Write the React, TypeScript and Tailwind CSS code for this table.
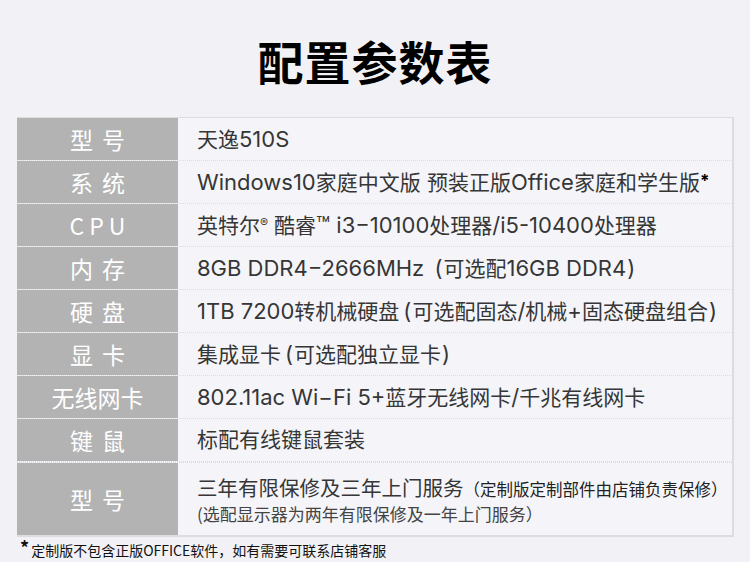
import React from "react";

// los tramos latinos se ven un poco más anchos que los chinos en la referencia
function Texto({ t }: { t: string }) {
  const partes = t.split(/([\u4e00-\u9fff，]+|[（）])/).filter(Boolean);
  return (
    <>
      {partes.map((p, i) => {
        if (p === "（") return <span key={i} className="text-[22px] ml-[4px] mr-[1px]">(</span>;
        if (p === "）") return <span key={i} className="text-[22px] ml-[1px]">)</span>;
        if (/[\u4e00-\u9fff]/.test(p)) return <span key={i}>{p}</span>;
        return <span key={i} className="text-[22px]">{p}</span>;
      })}
    </>
  );
}

const filas: { label: string[]; valor: React.ReactNode }[] = [
  { label: ["型", "号"], valor: <Texto t="天逸510S" /> },
  {
    label: ["系", "统"],
    valor: (
      <>
        <Texto t="Windows10家庭中文版 预装正版Office家庭和学生版" />
        <sup className="text-[17px] relative -top-[3px] text-black font-bold">*</sup>
      </>
    ),
  },
  {
    label: ["C", "P", "U"],
    valor: (
      <>
        英特尔<sup className="text-[12px] mr-[6px]">®</sup>酷睿<span className="text-[23px]">™</span>
        <Texto t=" i3−10100处理器/i5-10400处理器" />
      </>
    ),
  },
  { label: ["内", "存"], valor: <Texto t="8GB DDR4−2666MHz （可选配16GB DDR4）" /> },
  { label: ["硬", "盘"], valor: <Texto t="1TB 7200转机械硬盘（可选配固态/机械+固态硬盘组合）" /> },
  { label: ["显", "卡"], valor: <Texto t="集成显卡（可选配独立显卡）" /> },
  { label: ["无线网卡"], valor: <Texto t="802.11ac Wi−Fi 5+蓝牙无线网卡/千兆有线网卡" /> },
  { label: ["键", "鼠"], valor: "标配有线键鼠套装" },
];

const fuente = { fontFamily: '"Inter","Noto Sans CJK SC",sans-serif' };
const fuenteCJK = { fontFamily: '"Noto Sans CJK SC",sans-serif' };

function Etiqueta({ partes }: { partes: string[] }) {
  const gap = partes.length === 2 ? "gap-[9px]" : partes.length === 3 ? "gap-[5px]" : "gap-0";
  return (
    <div className={`w-[161px] shrink-0 bg-[#b3b3b3] flex items-center justify-center text-white text-[23px] ${gap}`} style={fuenteCJK}>
      {partes.map((p, i) => (
        <span key={i}>{p}</span>
      ))}
    </div>
  );
}

export default function App() {
  return (
    <main className="w-[750px] h-[562px] bg-[#f2f2f6] overflow-hidden" style={fuente}>
      <div className="h-[117px] flex items-center justify-center pt-[3px]">
        <h1 className="text-[46px] font-bold text-black tracking-[1px]" style={fuenteCJK}>配置参数表</h1>
      </div>

      <div className="ml-[17px] w-[717px] border-r-2 border-b-2 border-t border-[#dddde0] bg-[#f5f5f9]">
        {filas.map((f, i) => (
          <div key={i} className="flex h-[43px] border-b border-dotted border-[#dcdcdf] last:border-b-0">
            <Etiqueta partes={f.label} />
            <div className="flex items-center pl-[19px] text-[21px] text-[#363636] whitespace-nowrap">
              <span>{f.valor}</span>
            </div>
          </div>
        ))}
        <div className="flex h-[73px] border-t border-dotted border-[#dcdcdf]">
          <Etiqueta partes={["型", "号"]} />
          <div className="flex flex-col justify-center pl-[19px] pt-[2px] text-[#363636] whitespace-nowrap" style={fuenteCJK}>
            <div className="text-[20.5px] leading-[26px]">
              三年有限保修及三年上门服务
              <span className="text-[16.5px] text-[#222]">（定制版定制部件由店铺负责保修）</span>
            </div>
            <div className="text-[17px] leading-[24px] text-[#444]">(选配显示器为两年有限保修及一年上门服务）</div>
          </div>
        </div>
      </div>

      <p className="ml-[20px] mt-[3px] text-[14px] text-[#111]" style={fuenteCJK}>
        <sup className="text-[18px] font-bold relative -top-[1px] mr-[2px]">*</sup>定制版不包含正版OFFICE软件，如有需要可联系店铺客服
      </p>
    </main>
  );
}
